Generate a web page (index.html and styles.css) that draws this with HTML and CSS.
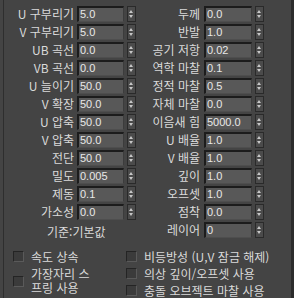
FILE: index.html
```html
<!DOCTYPE html>
<html lang="ko">
<head>
    <meta charset="UTF-8">
    <meta name="viewport" content="width=device-width, initial-scale=1.0">
    <title>천 속성</title>
    <link rel="stylesheet" href="styles.css">
</head>
<body>
    <div class="panel">
        <div class="params">
            <div class="col col-left">
                <div class="row"><span class="label">U 구부리기</span><span class="field">5.0</span><span class="spin"></span></div>
                <div class="row"><span class="label">V 구부리기</span><span class="field">5.0</span><span class="spin"></span></div>
                <div class="row"><span class="label">UB 곡선</span><span class="field">0.0</span><span class="spin"></span></div>
                <div class="row"><span class="label">VB 곡선</span><span class="field">0.0</span><span class="spin"></span></div>
                <div class="row"><span class="label">U 늘이기</span><span class="field">50.0</span><span class="spin"></span></div>
                <div class="row"><span class="label">V 확장</span><span class="field">50.0</span><span class="spin"></span></div>
                <div class="row"><span class="label">U 압축</span><span class="field">50.0</span><span class="spin"></span></div>
                <div class="row"><span class="label">V 압축</span><span class="field">50.0</span><span class="spin"></span></div>
                <div class="row"><span class="label">전단</span><span class="field">50.0</span><span class="spin"></span></div>
                <div class="row"><span class="label">밀도</span><span class="field">0.005</span><span class="spin"></span></div>
                <div class="row"><span class="label">제동</span><span class="field">0.1</span><span class="spin"></span></div>
                <div class="row"><span class="label">가소성</span><span class="field">0.0</span><span class="spin"></span></div>
                <div class="note">기준:기본값</div>
            </div>
            <div class="col col-right">
                <div class="row"><span class="label">두께</span><span class="field">0.0</span><span class="spin"></span></div>
                <div class="row"><span class="label">반발</span><span class="field">1.0</span><span class="spin"></span></div>
                <div class="row"><span class="label">공기 저항</span><span class="field">0.02</span><span class="spin"></span></div>
                <div class="row"><span class="label">역학 마찰</span><span class="field">0.1</span><span class="spin"></span></div>
                <div class="row"><span class="label">정적 마찰</span><span class="field">0.5</span><span class="spin"></span></div>
                <div class="row"><span class="label">자체 마찰</span><span class="field">0.0</span><span class="spin"></span></div>
                <div class="row"><span class="label">이음새 힘</span><span class="field">5000.0</span><span class="spin"></span></div>
                <div class="row"><span class="label">U 배율</span><span class="field">1.0</span><span class="spin"></span></div>
                <div class="row"><span class="label">V 배율</span><span class="field">1.0</span><span class="spin"></span></div>
                <div class="row"><span class="label">깊이</span><span class="field">1.0</span><span class="spin"></span></div>
                <div class="row"><span class="label">오프셋</span><span class="field">1.0</span><span class="spin"></span></div>
                <div class="row"><span class="label">점착</span><span class="field">0.0</span><span class="spin"></span></div>
                <div class="row"><span class="label">레이어</span><span class="field">0</span><span class="spin"></span></div>
            </div>
        </div>

        <div class="options">
            <div class="opt-col opt-left">
                <div class="check"><span class="box"></span><span class="check-text">속도 상속</span></div>
                <div class="check tall"><span class="box"></span><span class="check-text">가장자리 스<br>프링 사용</span></div>
            </div>
            <div class="opt-col opt-right">
                <div class="check"><span class="box"></span><span class="check-text">비등방성 (U,V 잠금 해제)</span></div>
                <div class="check"><span class="box"></span><span class="check-text">의상 깊이/오프셋 사용</span></div>
                <div class="check"><span class="box"></span><span class="check-text">충돌 오브젝트 마찰 사용</span></div>
            </div>
        </div>
    </div>
</body>
</html>
```

FILE: styles.css
```css
html, body {
    margin: 0;
    padding: 0;
    background-color: #444444;
}

body {
    font-family: "Noto Sans CJK KR", "Noto Sans", sans-serif;
    font-size: 12px;
    color: #dadada;
    width: 294px;
    height: 298px;
    overflow: hidden;
}

.panel {
    margin-left: 3px;
    height: 298px;
    border-left: 1px solid #2e2e2e;
    border-right: 3px solid #2c2c2c;
    box-sizing: border-box;
}

.params {
    display: flex;
    padding-top: 5px;
}

.col-left {
    width: 136px;
}

.row {
    display: flex;
    align-items: center;
    height: 18px;
}

.label {
    text-align: right;
    white-space: nowrap;
    line-height: 18px;
}

.col-left .label {
    width: 70px;
    margin-right: 3px;
}

.col-right .label {
    width: 60px;
    margin-right: 4px;
}

.field {
    box-sizing: border-box;
    height: 16px;
    padding-left: 1px;
    background-color: #585858;
    border-top: 2px solid #1c1c1c;
    border-left: 2px solid #1c1c1c;
    border-right: 1px solid #3c3c3c;
    border-bottom: 1px solid #4e4e4e;
    font-family: "Liberation Sans", Arial, sans-serif;
    font-size: 11px;
    line-height: 13px;
    color: #e8e8e8;
}

.col-left .field {
    width: 47px;
}

.col-right .field {
    width: 48px;
}

.spin {
    position: relative;
    box-sizing: border-box;
    width: 9px;
    height: 16px;
    margin-left: 3px;
    background-color: #4b4b4b;
    border: 1px solid #2a2a2a;
}

.spin::before,
.spin::after {
    content: "";
    position: absolute;
    left: 1px;
    border-left: 2.5px solid transparent;
    border-right: 2.5px solid transparent;
}

.spin::before {
    top: 3px;
    border-bottom: 3px solid #c8c8c8;
}

.spin::after {
    bottom: 3px;
    border-top: 3px solid #c8c8c8;
}

.note {
    height: 18px;
    line-height: 18px;
    padding-top: 2px;
    padding-left: 43px;
}

.options {
    display: flex;
    padding-top: 7px;
}

.opt-left {
    width: 122px;
}

.check {
    display: flex;
    align-items: center;
    height: 17px;
}

.check.tall {
    height: 28px;
    margin-top: 2px;
}

.box {
    flex: none;
    box-sizing: border-box;
    width: 11px;
    height: 11px;
    background-color: #3b3b3b;
    border-top: 1px solid #242424;
    border-left: 1px solid #242424;
    border-right: 1px solid #5a5a5a;
    border-bottom: 1px solid #5a5a5a;
}

.opt-left .box {
    margin-left: 9px;
}

.check-text {
    margin-left: 7px;
    white-space: nowrap;
    line-height: 14px;
}
```
